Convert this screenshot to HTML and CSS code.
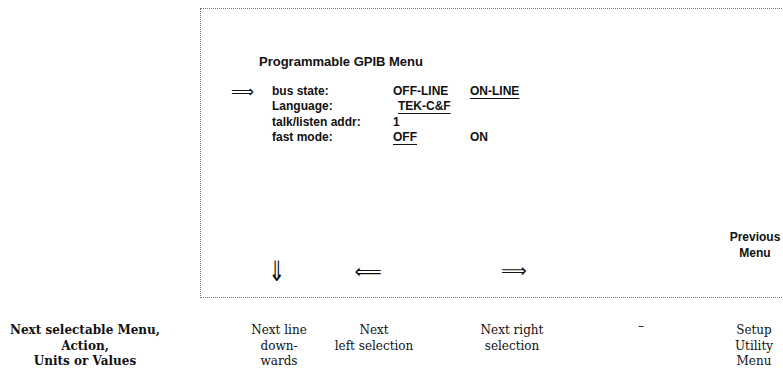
FILE: index.html
```html
<!DOCTYPE html>
<html lang="en">
<head>
    <meta charset="UTF-8">
    <meta name="viewport" content="width=device-width, initial-scale=1.0">
    <title>Programmable GPIB Menu</title>
    <link rel="stylesheet" href="styles.css">
</head>
<body>
    <div class="figure">
        <div class="screen">
            <h1 class="title">Programmable GPIB Menu</h1>
            <div class="menu">
                <span class="cursor">&#10233;</span>
                <span class="name">bus state:</span>
                <span class="val">OFF-LINE</span>
                <span class="val"><u>ON-LINE</u></span>

                <span class="cursor"></span>
                <span class="name">Language:</span>
                <span class="val indent"><u>TEK-C&amp;F</u></span>
                <span class="val"></span>

                <span class="cursor"></span>
                <span class="name">talk/listen addr:</span>
                <span class="val">1</span>
                <span class="val"></span>

                <span class="cursor"></span>
                <span class="name">fast mode:</span>
                <span class="val"><u>OFF</u></span>
                <span class="val">ON</span>
            </div>
            <div class="side">
                <span class="side-label">Previous<br>Menu</span>
            </div>
            <div class="arrows">
                <span class="arrow arrow-down">&#8659;</span>
                <span class="arrow arrow-left">&#10232;</span>
                <span class="arrow arrow-right">&#10233;</span>
            </div>
        </div>

        <div class="keys">
            <div class="key key-main">Next selectable Menu,<br>Action,<br>Units or Values</div>
            <div class="key key-down">Next line<br>down-<br>wards</div>
            <div class="key key-left">Next<br>left selection</div>
            <div class="key key-right">Next right<br>selection</div>
            <div class="key key-none">&ndash;</div>
            <div class="key key-setup">Setup<br>Utility<br>Menu</div>
        </div>
    </div>
</body>
</html>
```

FILE: styles.css
```css
html, body {
    margin: 0;
    padding: 0;
    background-color: #fff;
    overflow: hidden;
}

body {
    font-family: "Liberation Sans", Arial, sans-serif;
    color: #111;
}

.figure {
    padding-top: 8px;
    width: 783px;
}

.screen {
    margin-left: 200px;
    width: 620px;
    height: 288px;
    border: 1px dotted #777;
    display: flex;
    flex-direction: column;
}

.title {
    margin: 45px 0 0 58px;
    font-size: 13px;
    font-weight: bold;
    line-height: 15px;
}

.menu {
    margin: 15px 0 0 30px;
    display: grid;
    grid-template-columns: 41px 121px 77px auto;
    font-size: 12px;
    font-weight: bold;
    line-height: 15.4px;
}

.menu u {
    text-decoration-thickness: 1px;
    text-underline-offset: 3px;
}

.cursor {
    font-family: "DejaVu Sans", sans-serif;
    font-weight: normal;
    font-size: 16px;
}

.indent {
    padding-left: 5px;
}

.side {
    margin-top: auto;
    display: flex;
    justify-content: flex-end;
    padding-right: 34px;
}

.side-label {
    width: 64px;
    text-align: center;
    font-size: 12px;
    font-weight: bold;
    line-height: 16px;
}

.arrows {
    display: flex;
    height: 20px;
    margin-bottom: 16px;
    padding-left: 31px;
    font-family: "DejaVu Sans", sans-serif;
    line-height: 20px;
}

.arrow {
    text-align: center;
    font-size: 18px;
}

.arrow-down {
    width: 90px;
    font-size: 20px;
    transform: scaleY(1.4);
}

.arrow-left {
    width: 92px;
    font-size: 19px;
}

.arrow-right {
    width: 100px;
    margin-left: 50px;
}

.keys {
    display: flex;
    margin-top: 25px;
    font-family: "DejaVu Serif", "Liberation Serif", serif;
    font-size: 12px;
    line-height: 15.5px;
}

.key {
    flex-shrink: 0;
    text-align: center;
}

.key-main {
    width: 170px;
    font-weight: bold;
}

.key-down {
    width: 94px;
    margin-left: 62px;
}

.key-left {
    width: 96px;
}

.key-right {
    width: 120px;
    margin-left: 30px;
}

.key-none {
    width: 138px;
    margin-top: -4px;
}

.key-setup {
    width: 88px;
}
```
